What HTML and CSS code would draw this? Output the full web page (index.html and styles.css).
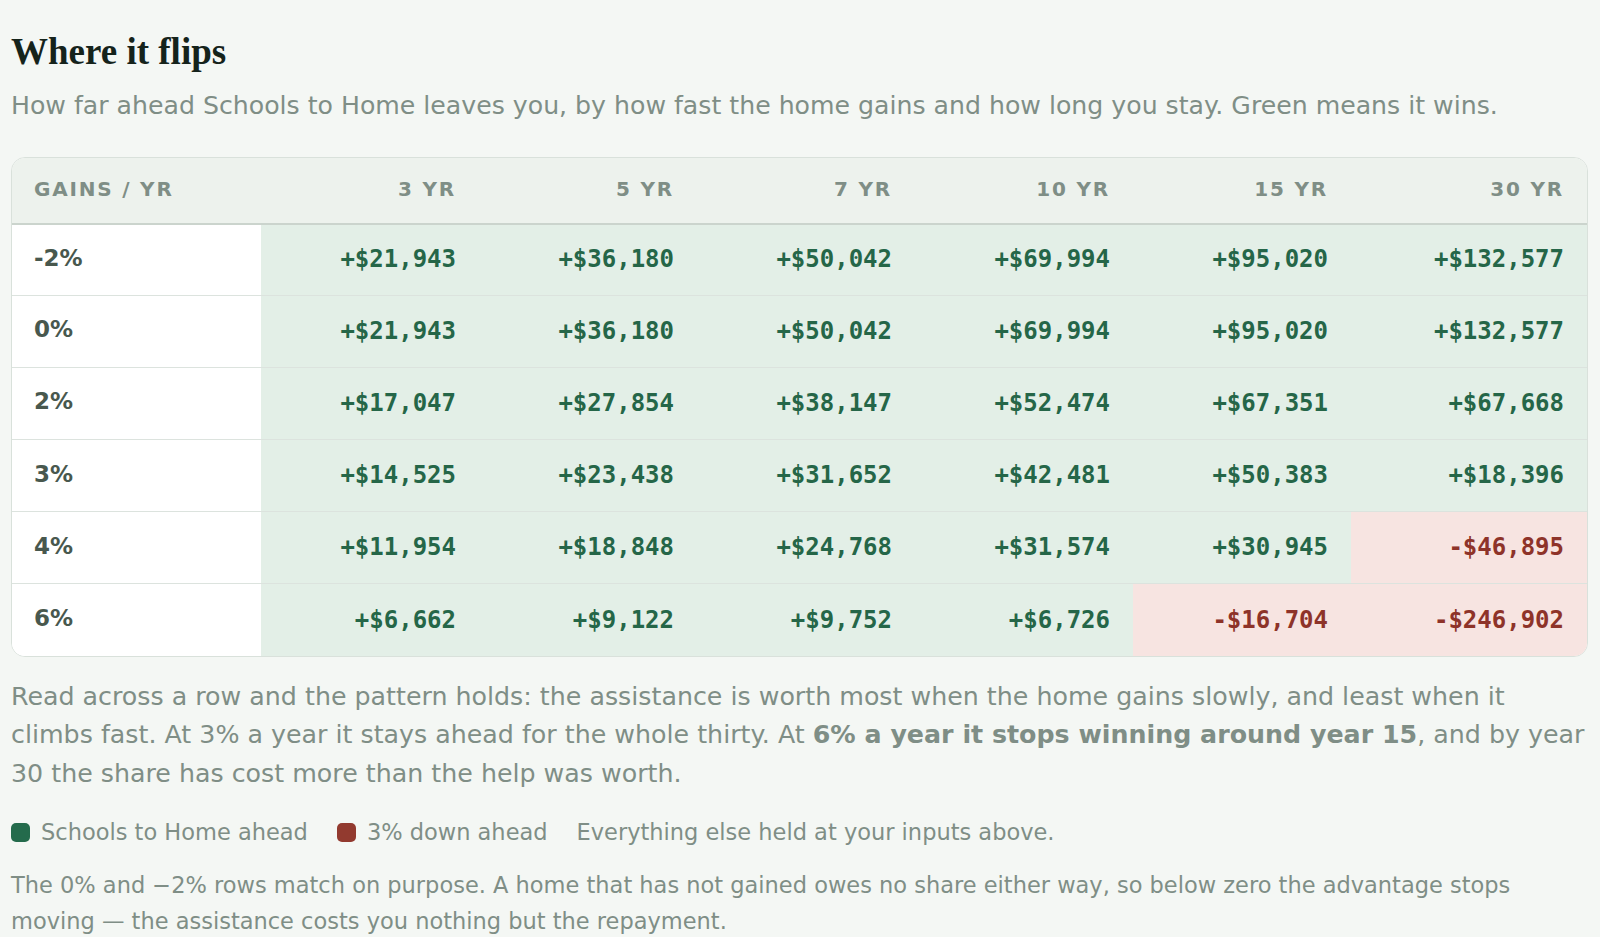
FILE: index.html
```html
<!DOCTYPE html>
<html lang="en">
<head>
<meta charset="utf-8">
<title>Where it flips</title>
<link rel="stylesheet" href="styles.css">
</head>
<body>
<section class="flips">
  <h2 class="title">Where it flips</h2>
  <p class="subtitle">How far ahead Schools to Home leaves you, by how fast the home gains and how long you stay. Green means it wins.</p>

  <div class="table-wrap">
    <table class="grid">
      <colgroup>
        <col class="c-label">
        <col class="c-yr"><col class="c-yr"><col class="c-yr"><col class="c-yr"><col class="c-yr">
        <col class="c-last">
      </colgroup>
      <thead>
        <tr>
          <th class="h-label">Gains / yr</th>
          <th>3 yr</th><th>5 yr</th><th>7 yr</th><th>10 yr</th><th>15 yr</th><th>30 yr</th>
        </tr>
      </thead>
      <tbody>
        <tr>
          <td class="label">-2%</td>
          <td class="win">+$21,943</td><td class="win">+$36,180</td><td class="win">+$50,042</td><td class="win">+$69,994</td><td class="win">+$95,020</td><td class="win">+$132,577</td>
        </tr>
        <tr>
          <td class="label">0%</td>
          <td class="win">+$21,943</td><td class="win">+$36,180</td><td class="win">+$50,042</td><td class="win">+$69,994</td><td class="win">+$95,020</td><td class="win">+$132,577</td>
        </tr>
        <tr>
          <td class="label">2%</td>
          <td class="win">+$17,047</td><td class="win">+$27,854</td><td class="win">+$38,147</td><td class="win">+$52,474</td><td class="win">+$67,351</td><td class="win">+$67,668</td>
        </tr>
        <tr>
          <td class="label">3%</td>
          <td class="win">+$14,525</td><td class="win">+$23,438</td><td class="win">+$31,652</td><td class="win">+$42,481</td><td class="win">+$50,383</td><td class="win">+$18,396</td>
        </tr>
        <tr>
          <td class="label">4%</td>
          <td class="win">+$11,954</td><td class="win">+$18,848</td><td class="win">+$24,768</td><td class="win">+$31,574</td><td class="win">+$30,945</td><td class="lose">-$46,895</td>
        </tr>
        <tr>
          <td class="label">6%</td>
          <td class="win">+$6,662</td><td class="win">+$9,122</td><td class="win">+$9,752</td><td class="win">+$6,726</td><td class="lose">-$16,704</td><td class="lose">-$246,902</td>
        </tr>
      </tbody>
    </table>
  </div>

  <p class="reading">Read across a row and the pattern holds: the assistance is worth most when the home gains slowly, and least when it climbs fast. At 3% a year it stays ahead for the whole thirty. At <strong>6% a year it stops winning around year 15</strong>, and by year 30 the share has cost more than the help was worth.</p>

  <div class="legend">
    <span class="key"><span class="swatch swatch-win"></span>Schools to Home ahead</span>
    <span class="key"><span class="swatch swatch-lose"></span>3% down ahead</span>
    <span class="key">Everything else held at your inputs above.</span>
  </div>

  <p class="footnote">The 0% and −2% rows match on purpose. A home that has not gained owes no share either way, so below zero the advantage stops moving — the assistance costs you nothing but the repayment.</p>
</section>
</body>
</html>
```

FILE: styles.css
```css
html, body {
  margin: 0;
  padding: 0;
  background: #f4f7f4;
}

body {
  font-family: "DejaVu Sans", sans-serif;
  color: #7d8c84;
}

.flips {
  padding: 0 12px 0 11px;
}

.title {
  margin: 30px 0 0;
  font-family: "Liberation Serif", "Times New Roman", serif;
  font-weight: bold;
  font-size: 37px;
  line-height: 44px;
  color: #15231b;
}

.subtitle {
  margin: 15px 0 0;
  font-size: 25.2px;
  line-height: 34px;
  color: #7f8e86;
}

.table-wrap {
  margin-top: 34px;
  border: 1px solid #d9e1db;
  border-radius: 14px;
  overflow: hidden;
  background: #ffffff;
}

.grid {
  width: 100%;
  table-layout: fixed;
  border-collapse: collapse;
  border-spacing: 0;
}

.c-label { width: 249px; }
.c-yr { width: 218px; }
.c-last { width: auto; }

.grid thead th {
  box-sizing: border-box;
  height: 66px;
  padding: 0 23px 3px 0;
  background: #edf2ed;
  border-bottom: 2px solid #cbd4cd;
  font-family: "DejaVu Sans", sans-serif;
  font-weight: bold;
  font-size: 20px;
  letter-spacing: 1.8px;
  text-transform: uppercase;
  text-align: right;
  color: #7f8e86;
  vertical-align: middle;
}

.grid thead th.h-label {
  text-align: left;
  padding: 0 0 3px 22px;
}

.grid tbody td {
  box-sizing: border-box;
  height: 72.2px;
  padding: 0 23px 1px 0;
  border-top: 1px solid #dce3de;
  text-align: right;
  vertical-align: middle;
  font-family: "DejaVu Sans Mono", monospace;
  font-weight: bold;
  font-size: 24px;
}

.grid tbody tr:first-child td {
  border-top: none;
  height: 71.2px;
}

.grid tbody td.label {
  padding: 0 0 4px 22px;
  text-align: left;
  background: #ffffff;
  font-family: "DejaVu Sans", sans-serif;
  font-size: 23px;
  color: #48584e;
}

.grid tbody td.win {
  background: #e3efe7;
  color: #256648;
}

.grid tbody td.lose {
  background: #f7e4e1;
  color: #8e3329;
}

.reading {
  margin: 21px 0 0;
  font-size: 25.3px;
  line-height: 38.3px;
  color: #7f8e86;
}

.reading strong {
  font-weight: bold;
}

.legend {
  margin-top: 24px;
  display: flex;
  align-items: center;
  gap: 29px;
  font-size: 22.5px;
  line-height: 30px;
  color: #7f8e86;
}

.key {
  display: inline-flex;
  align-items: center;
  gap: 11px;
}

.swatch {
  display: inline-block;
  width: 19px;
  height: 19px;
  border-radius: 5px;
}

.swatch-win { background: #246b4c; }
.swatch-lose { background: #923a2f; }

.footnote {
  margin: 20px 0 0;
  font-size: 22.5px;
  line-height: 36px;
  color: #7f8e86;
}
```
